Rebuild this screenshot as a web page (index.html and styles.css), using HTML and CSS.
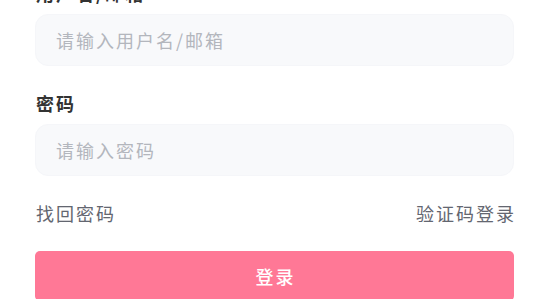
FILE: index.html
```html
<!DOCTYPE html>
<html lang="zh-CN">
<head>
<meta charset="utf-8">
<link rel="stylesheet" href="styles.css">
</head>
<body>
<form class="login">
  <div class="field">
    <label class="label">用户名/邮箱</label>
    <div class="input"><span class="placeholder">请输入用户名/邮箱</span></div>
  </div>
  <div class="field">
    <label class="label">密码</label>
    <div class="input"><span class="placeholder">请输入密码</span></div>
  </div>
  <div class="links">
    <span class="link">找回密码</span>
    <span class="link">验证码登录</span>
  </div>
  <div class="btn">登录</div>
</form>
</body>
</html>
```
FILE: styles.css
```css
* { box-sizing: border-box; }
html, body { margin: 0; padding: 0; background: #ffffff; overflow: hidden; }
body {
  width: 549px;
  height: 299px;
  font-family: "Noto Sans CJK SC", "Noto Sans", sans-serif;
}
.login {
  display: flex;
  flex-direction: column;
  margin-top: -18px;
  padding: 0 35px 0 35px;
}
.field {
  display: flex;
  flex-direction: column;
  margin-bottom: 26px;
}
.label {
  font-size: 18px;
  line-height: 22px;
  letter-spacing: 2px;
  font-weight: 600;
  color: #333333;
  margin-bottom: 10px;
  padding-left: 1px;
}
.input {
  height: 52px;
  border-radius: 13px;
  background: #f8f9fb;
  border: 1px solid #f5f6f9;
  display: flex;
  align-items: center;
  padding-left: 20px;
}
.placeholder {
  font-size: 18px;
  letter-spacing: 2px;
  color: #b3b6bd;
}
.links {
  display: flex;
  justify-content: space-between;
  font-size: 18px;
  line-height: 26px;
  letter-spacing: 2px;
  color: #636670;
  margin-top: -2px;
  margin-bottom: 25px;
}
.link:last-child { margin-right: -2px; }
.link:first-child { padding-left: 1px; }
.btn {
  height: 50px;
  border-radius: 5px;
  background: #ff7896;
  color: #ffffff;
  font-size: 18px;
  letter-spacing: 2px;
  font-weight: 500;
  display: flex;
  align-items: center;
  justify-content: center;
  padding-left: 2px;
}
```
